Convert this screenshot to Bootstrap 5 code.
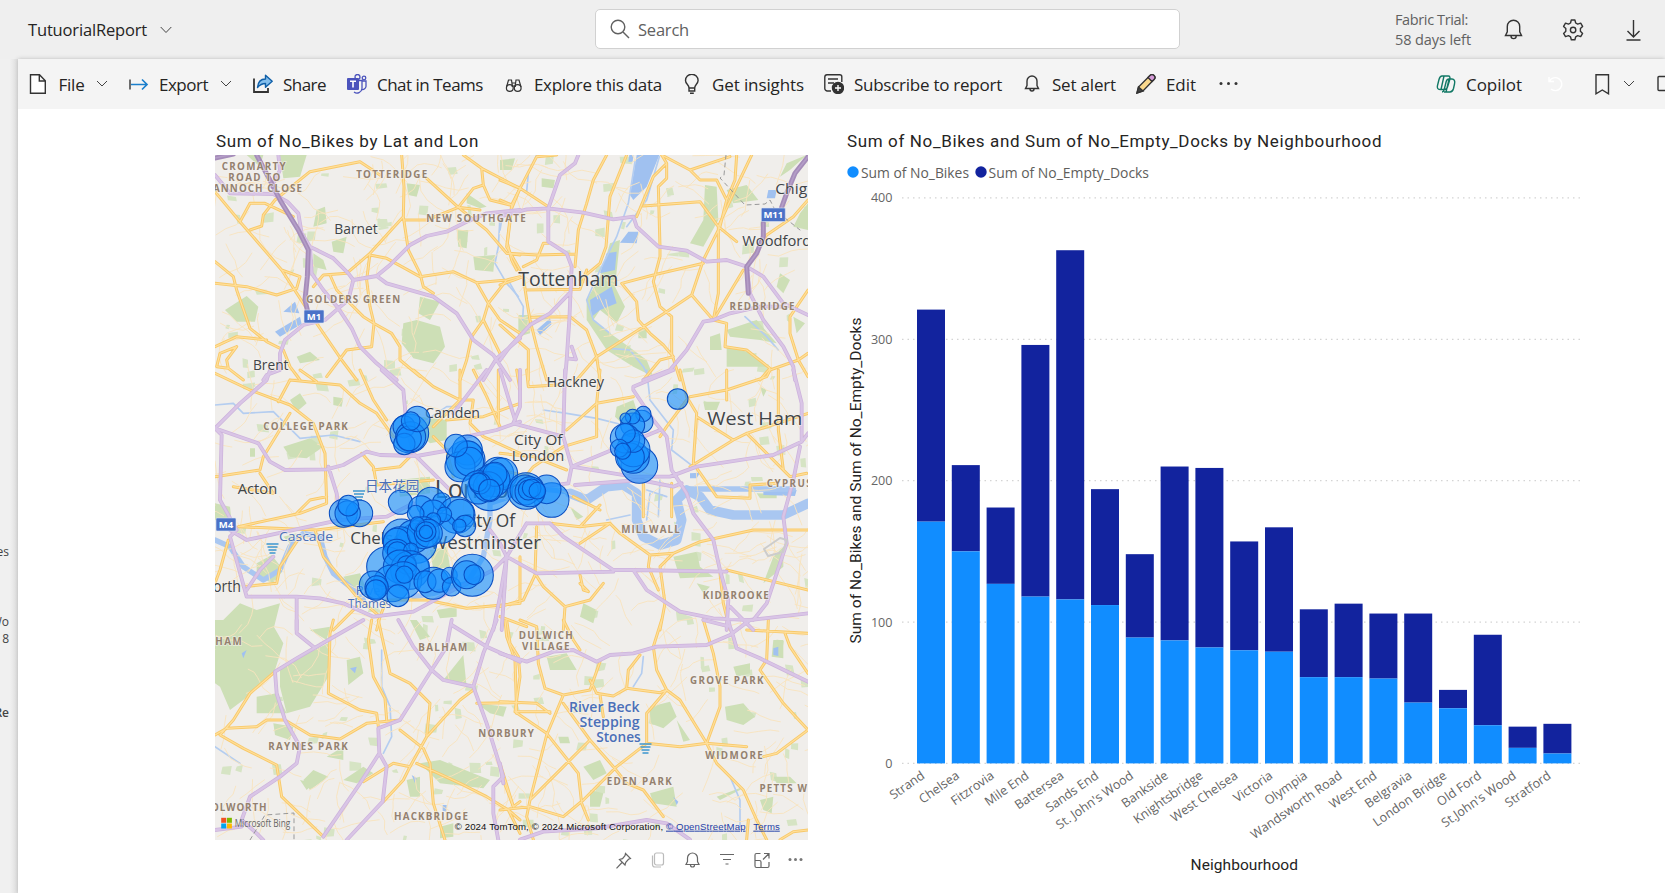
<!DOCTYPE html>
<html lang="en">
<head>
<meta charset="utf-8">
<title>TutuorialReport</title>
<link href="https://cdn.jsdelivr.net/npm/bootstrap@5.3.0/dist/css/bootstrap.min.css" rel="stylesheet">
<style>
body{font-family:"Open Sans","Noto Sans","Noto Sans CJK SC",sans-serif;background:#efefef;color:#252423;height:893px;overflow:hidden}
svg{display:block;flex:none}
.ln{fill:none;stroke:#333;stroke-width:1.4}
.thin{fill:none;stroke:#444;stroke-width:1}
.topbar{height:59px;display:grid;grid-template-columns:28px 567px 800px 109px 58px 63px 1fr;align-items:center}
.report-name{font-size:16.5px;line-height:24px}
.search-box{width:585px;height:40px;margin-top:-1px;background:#fff;border:1.5px solid #d1d1d1;border-radius:5px;padding-left:14px;color:#616161;font-size:16.5px}
.search-box span{margin-top:2px}
.trial{font-size:14.5px;line-height:20px;color:#616161}
.rail{width:18px;background:linear-gradient(90deg,#f0f0f0 55%,#dedede);overflow:hidden;font-size:12px;line-height:16px;color:#444}
.rail span{display:block;width:9px;direction:rtl;white-space:nowrap}
.canvas{background:#fff;box-shadow:0 0 4px #bbb;overflow:hidden}
.commands{height:50px;background:#f4f4f4;display:grid;grid-template-columns:100.5px 124px 94px 157px 178px 142px 198px 114px 82px 218px 112px 47px 62px 1fr;padding-left:10.5px;align-items:center;font-size:17px}
.cmd{display:flex;align-items:center;white-space:nowrap}
.cmd .lbl{margin-left:10px;margin-top:1px}
.cmd .chev{margin-left:12px}
[data-fit]{display:inline-block;white-space:nowrap}
.vtitle{font-family:Roboto,sans-serif;font-size:17px;line-height:24px;color:#252423}
.map-col{width:593px;margin-left:197px;padding-top:20px}
.map-col .vtitle{height:26px;padding-left:1px}
.chart-col{margin-left:32px}
.vis-tools{display:grid;grid-template-columns:35px 35px 34px 35px 34px 20px;padding:12px 0 0 400px}
.din{font-family:Roboto,sans-serif;fill:#252423}
.ax{font-size:12.6px;fill:#666}
.roads path{fill:none;stroke-linejoin:round;stroke-linecap:round}
.bub circle{fill:#118dff;fill-opacity:.6;stroke:#0a4fc2;stroke-width:3.2}
</style>
</head>
<body>
<header class="topbar">
  <span></span>
  <div class="d-flex align-items-center">
    <span class="report-name" data-fit="119">TutuorialReport</span>
    <svg style="margin:1px 0 0 13px" width="12" height="8"><path class="thin" d="M.7 1 6 6.5 11.3 1"/></svg>
  </div>
  <div class="search-box d-flex align-items-center">
    <svg width="20" height="20" class="ln" style="stroke:#616161"><circle cx="8" cy="8" r="6.8"/><path d="m13 13 6 6"/></svg>
    <span data-fit="51" class="ms-2">Search</span>
  </div>
  <div class="trial"><div><span data-fit="73">Fabric Trial:</span></div><div><span data-fit="76">58 days left</span></div></div>
  <svg width="20" height="24" class="ln"><path d="M1.5 17.5h16l-1.8-3.6V8.500a6.200 6.200 0 0 0-12.400 0v5.400zM7 18a2.600 2.600 0 0 0 5.200 0"/></svg>
  <svg width="23" height="24" viewBox="0 0 23 24" class="ln"><path d="M9.300 2h3.600l.8 3 2 1.100 3-.9 1.900 3.200L18.400 10.600v2.600l2.200 2.200-1.900 3.200-3-.9-2 1.100-.8 3H9.300l-.8-3-2-1.100-3 .9-1.900-3.200 2.200-2.200v-2.600L1.600 8.400l1.900-3.200 3 .9 2-1.100z" stroke-linejoin="round"/><circle cx="11.100" cy="12" r="2.700"/></svg>
  <svg width="18" height="24" class="ln"><path d="M8.500 2v16.500M2.500 13l6 6 6-6M1.500 22h14"/></svg>
</header>
<div class="d-flex" style="height:834px">
  <aside class="rail">
    <span style="margin-top:485px">es</span><span style="margin-top:54px">Wo</span><span style="margin-top:1px">8</span><span class="fw-semibold" style="margin-top:58px">Re</span>
  </aside>
  <main class="canvas flex-grow-1">
    <nav class="commands">
      <div class="cmd"><svg width="20" height="20" class="ln"><path d="M2.500.8h9l5.800 6v12.500H2.500zM11.300.8v6.200h6" fill="#fff"/></svg><span class="lbl" data-fit="26">File</span><svg class="chev" width="12" height="8"><path class="thin" d="m1 1 5 5 5-5"/></svg></div>
      <div class="cmd"><svg width="20" height="20" class="ln"><path d="M1 5.500v10"/><path d="M2 10.500h16M13 5.500l5 5-5 5" stroke="#1b7fcc" stroke-width="1.700"/></svg><span class="lbl" data-fit="49">Export</span><svg class="chev" width="12" height="8"><path class="thin" d="m1 1 5 5 5-5"/></svg></div>
      <div class="cmd"><svg width="20" height="20" class="ln"><path d="M1 4.500V18h14v-4" stroke-width="1.800"/><path d="M4.500 13.500C5 7.500 8 5 12.500 5V1.300l6.700 6-6.700 6V9.500c-3.500 0-5.500 1-8 4z" fill="#83beec" stroke="#0f5fa8" stroke-linejoin="round"/></svg><span class="lbl" data-fit="43">Share</span></div>
      <div class="cmd"><svg width="20" height="20"><g fill="none" stroke="#4b53bc" stroke-width="1.300"><circle cx="10.500" cy="3" r="2.500"/><circle cx="17" cy="4" r="1.800"/><path d="M8 6.500h7v8a5 5 0 0 1-8 3.500M15 7h4v5.500a3.500 3.500 0 0 1-4 3"/></g><rect y="4" width="12" height="12" rx="1" fill="#4b53bc"/><path d="M3 7.300h6M6 7.300v6.200" stroke="#fff" stroke-width="1.600"/></svg><span class="lbl" data-fit="106">Chat in Teams</span></div>
      <div class="cmd"><svg width="20" height="20" class="ln" style="stroke-width:1.200"><circle cx="5.800" cy="14" r="3.400"/><circle cx="13.700" cy="14" r="3.400"/><path d="M2.500 13 4.500 6h3l.7 5v2M17 13l-2-7h-3l-.7 5v2M8 9h3.500M8 12h3.500"/></svg><span class="lbl" data-fit="128">Explore this data</span></div>
      <div class="cmd"><svg width="20" height="20" class="ln"><path d="M7 14c0-3.500-3.500-4-3.500-7.500a6.300 6.300 0 0 1 12.600 0C16 10 12.700 10.500 12.700 14zM7 14v3h5.700v-3M8 19.300h3.800"/></svg><span class="lbl" data-fit="92">Get insights</span></div>
      <div class="cmd"><svg width="20" height="20" class="ln"><path d="M7 17H3.500a2.500 2.500 0 0 1-2.700-2.500V3A2.300 2.300 0 0 1 3 .8h12.800A2 2 0 0 1 17.800 2.800V8M4 5h10M4 9h6"/><circle cx="14" cy="14" r="5.500" fill="#333"/><path d="M11 14h6M14 11v6" stroke="#fff"/></svg><span class="lbl" data-fit="148">Subscribe to report</span></div>
      <div class="cmd"><svg width="20" height="20" class="ln"><path d="M3.500 14.500h13L15 11.500V7a5 5 0 0 0-10 0v4.500zM8 15a2 2 0 0 0 4 0"/></svg><span class="lbl" data-fit="64">Set alert</span></div>
      <div class="cmd"><svg width="20" height="20" class="ln"><path d="m1 19 1.500-6L14 1.500a2.500 2.500 0 0 1 4 4L7 17z" fill="#fbd98c"/><path d="m14 1.500a2.500 2.500 0 0 1 4 4l-2 2-4-4z" fill="#d59ad8"/><path d="m1 19 1.500-6 4.500 4z" fill="#444"/></svg><span class="lbl" data-fit="30">Edit</span></div>
      <div class="cmd"><svg width="22" height="6"><g fill="#333"><circle cx="3" cy="2.500" r="1.500"/><circle cx="10.500" cy="2.500" r="1.500"/><circle cx="18" cy="2.500" r="1.500"/></g></svg></div>
      <div class="cmd"><svg width="20" height="20" class="ln" style="stroke:#117865"><path d="M6 2h6.500c2 0 1.500 2.500 1 4.500l-2 6.500c-.7 2-1.500 2.500-3 2.500H4c-2.500 0-3-2-2.500-4L3 5.500C3.700 3 4.500 2 6 2zM8 18h6c2 0 3-1.500 3.500-3.500l1-4.500c.8-3-.3-5-2.500-5h-3c-1.500 0-2.300.8-2.800 2.500l-2 8c-.4 1.500-.7 2.500-2.200 2.500M8 2 5 15.500M13 5.500 10 18"/></svg><span class="lbl" data-fit="56">Copilot</span></div>
      <div class="cmd"><svg width="18" height="18" class="ln" style="stroke:#fff"><path d="M1 2v4.500h5M1.500 6.200A6.500 6.500 0 1 1 3 14"/></svg></div>
      <div class="cmd"><svg width="15" height="21" class="ln"><path d="M1 .8h12.500v19L7.300 16 1 19.800z"/></svg><svg style="margin-left:13px" width="12" height="8"><path class="thin" d="m1 1 5 5 5-5"/></svg></div>
      <div class="cmd"><svg width="12" height="18" class="ln"><rect x="1" y="1.500" width="20" height="14" rx="1"/></svg></div>
    </nav>
    <div class="d-flex">
      <section class="map-col">
        <div class="vtitle"><span data-fit="263">Sum of No_Bikes by Lat and Lon</span></div>
        <svg id="map" width="593" height="685" viewBox="215 155 593 685"></svg>
        <div class="vis-tools">
          <svg width="18" height="18" class="ln" style="stroke:#666;stroke-width:1.200"><path d="m10.500 1.500 5 5-2 .8-2.700 3L10 13 4.500 7.500l3-.8 2.500-3zM7 10.500l-5.500 5.800"/></svg>
          <svg width="18" height="18" class="ln" style="stroke:#bbb;stroke-width:1.200"><rect x="4.500" y="1" width="9" height="12" rx="2"/><path d="M2.500 3.500v9q0 2.500 2.500 2.500h6"/></svg>
          <svg width="18" height="18" class="ln" style="stroke:#666;stroke-width:1.200"><path d="M1 12.500h13l-1.500-3V6a5 5 0 0 0-10 0v3.500zM5.500 13a2 2 0 0 0 4 0"/></svg>
          <svg width="18" height="18" class="ln" style="stroke:#666;stroke-width:1.200"><path d="M1 2.500h14M4 7.500h8M6.500 12h3"/></svg>
          <svg width="18" height="18" class="ln" style="stroke:#666;stroke-width:1.200"><path d="M6.500 1.500H2.500Q1 1.500 1 3v11q0 1.500 1.500 1.500h11q1.500 0 1.500-1.500v-4M1 8.500h4.500q1.500 0 1.500 1.500v5.500M10 1.500h5v5M15 1.500 9 7.500"/></svg>
          <svg width="18" height="18"><g fill="#777"><circle cx="2" cy="7.500" r="1.500"/><circle cx="7.500" cy="7.500" r="1.500"/><circle cx="13" cy="7.500" r="1.500"/></g></svg>
        </div>
      </section>
      <section class="chart-col">
        <svg id="chart" width="780" height="784" viewBox="840 109 780 784"></svg>
      </section>
    </div>
  </main>
</div>
<script src="https://cdn.jsdelivr.net/npm/bootstrap@5.3.0/dist/js/bootstrap.bundle.min.js"></script>
<script>
// letter-spacing that makes each label take its nominal width
document.querySelectorAll('[data-fit]').forEach(e=>{
  const w=e.getBoundingClientRect().width,n=e.textContent.length;
  e.style.letterSpacing=((e.dataset.fit-w)/n).toFixed(3)+'px';
});

// stacked column chart
const rows=[['Strand',171,321],['Chelsea',150,211],['Fitzrovia',127,181],['Mile End',118,296],['Battersea',116,363],['Sands End',112,194],["St. John's Wood",89,148],['Bankside',87,210],['Knightsbridge',82,209],['West Chelsea',80,157],['Victoria',79,167],['Olympia',61,109],['Wandsworth Road',61,113],['West End',60,106],['Belgravia',43,106],['London Bridge',39,52],['Old Ford',27,91],["St.John's Wood",11,26],['Stratford',7,28]];
const Y=v=>763.4-v*1.4137;
let s='<text class="din" x="847" y="146.500" font-size="17" textLength="534.500">Sum of No_Bikes and Sum of No_Empty_Docks by Neighbourhood</text>'+
'<circle cx="853" cy="172" r="5.700" fill="#118dff"/><text x="861" y="177.500" font-size="14.500" fill="#605e5c" textLength="108" lengthAdjust="spacingAndGlyphs">Sum of No_Bikes</text>'+
'<circle cx="981" cy="172" r="5.700" fill="#12239e"/><text x="988.500" y="177.500" font-size="14.500" fill="#605e5c" textLength="160.500" lengthAdjust="spacingAndGlyphs">Sum of No_Empty_Docks</text>';
for(let v=0;v<=400;v+=100)s+=`<path d="M902 ${Y(v)}H1584" stroke="#d4d4d4" stroke-width="1.300" stroke-dasharray="1.500 4"/><text class="ax" x="892.500" y="${Y(v)+4.5}" text-anchor="end">${v}</text>`;
rows.forEach(([n,a,t],i)=>{
  const x=917+i*34.8;
  s+=`<rect x="${x}" y="${Y(t)}" width="28" height="${Y(a)-Y(t)}" fill="#12239e"/><rect x="${x}" y="${Y(a)}" width="28" height="${Y(0)-Y(a)}" fill="#118dff"/>`+
  `<text class="ax" text-anchor="end" transform="translate(${x+8.5} 777.500) rotate(-35)">${n}</text>`;
});
s+='<text class="din" font-size="15.500" transform="translate(861 643.500) rotate(-90)" textLength="326">Sum of No_Bikes and Sum of No_Empty_Docks</text><text class="din" x="1190.500" y="870" font-size="15.500" textLength="107.500">Neighbourhood</text>';
document.getElementById('chart').innerHTML=s;

// map sheets, each drawn on a 3x grid from its own origin
const sheets=[
{o:[200,120],
p:'M45 165 90 220 220 222 262 245 295 280 305 340 330 380 400 415 445 460 460 480 530 468 570 435 630 375 680 348 740 335 800 305 860 280 960 270M235 105 240 150 215 200M330 380 335 460 370 510 415 565 455 625 480 680 530 730 590 780M460 480 445 540 415 565 375 600 310 615 255 660 240 700 240 750 200 765 190 780M530 468 560 490 700 530 770 580 820 660 880 705 930 780M960 655 890 715 850 780',
d:'M45 114 100 102M170 105 215 190 240 240 295 330 325 390 322 470 315 540 322 570',
r:'M45 215 120 305 245 450 310 550 350 610 425 720 470 780M120 305 150 250 195 250 280 290M150 330 185 318 190 285 225 240 330 155 480 125 540 165M605 105 612 200 610 290 510 400 440 460 370 465 340 500M610 290 625 390 660 460 670 500 700 520M510 400 500 480 510 560 522 610 515 680 440 690 380 770M510 405 560 415 660 470 760 455 830 488 920 480 960 470M390 465 410 510 490 590 525 612 575 640 600 680 600 720 660 770M610 300 680 300 775 262 840 270M680 175 775 262 820 205 850 195 870 240 930 255M790 105 845 145 850 195M845 145 960 205 935 255 920 380 960 450M775 262 860 330 920 400 960 405M45 425 100 470 110 510 150 625 200 665 250 690 270 740 300 780M45 490 140 500 230 525 290 505 300 470 245 450M45 680 110 650 200 660M110 680 60 700 50 740 85 745 130 780M110 680 80 720 85 745M830 488 865 550 850 600 880 660 900 700M920 480 865 550 900 600 960 640M850 600 815 650 800 720 780 780',
g:'M75 570 140 528 175 560 165 605 110 605ZM610 610 650 600 720 620 735 680 700 730 640 715 605 670ZM820 410 885 405 880 455 825 450ZM240 105 320 105 300 170 250 175ZM350 270 375 260 380 310 340 320ZM800 220 860 260 840 265 800 250ZM660 530 720 545 690 600 655 580ZM290 710 330 695 360 720 300 730ZM395 365 440 350 430 400 400 395ZM770 330 805 330 800 385 775 380ZM340 400 370 420 380 450 340 440ZM620 190 660 195 650 230 625 225ZM140 105 190 105 180 140Z',
w:'M225 635 300 590 305 612 240 650ZM250 575 285 545 298 580Z',v:'M900 290 895 380 885 430 920 490 955 530'},
{o:[500,120],
p:'M235 105 225 130 180 165 145 265 145 365 200 400 215 440 208 600 200 720 195 780M0 290 80 268 145 265 250 278 340 298 400 290 410 320 475 380 560 392 620 425 680 420 740 440 790 470 850 550 924 585M208 520 150 580 90 615 30 680 0 720M215 680 228 718 200 715M430 780 510 750 560 690 610 605 640 600 690 580 780 560 850 560M740 440 750 520 790 600 850 680 880 740 885 780',
d:'M924 110 885 160 860 220 845 262M790 310 790 350 770 400 740 440 745 520',
r:'M0 180 60 205 145 260M170 105 110 110 60 205 35 265 22 370 35 420 50 450M0 240 35 255M320 105 280 180 260 250 235 330 225 440M380 105 330 230 318 380 300 430 240 480M485 105 500 130 460 170 410 290M500 130 500 175 475 200 480 380 480 410 460 485 480 560 515 590 515 700 540 780M485 105 570 150 690 110M570 150 600 180 650 180 680 240M710 105 705 180 680 240 660 320 610 420 575 525 500 575 290 710 230 780M755 105 700 220 655 320 655 440 655 520 640 600M430 258 600 245 655 320 710 365M610 430 460 465 365 490 410 545 415 600 450 640 490 675 520 710M575 525 640 600 680 610 675 680 740 690 810 745 780 780M640 600 730 450M924 240 880 290 800 345 740 440M0 495 70 470 80 540 90 600 110 680 140 780M22 400 110 405 225 402M70 440 110 420 130 370 145 370M75 510 240 508 260 450M95 592 210 590 260 630 290 710 300 780M0 615 85 690 85 780M924 510 870 590 870 640 895 720 924 700M895 720 810 750M895 720 924 770M520 710 480 720 430 780',
g:'M615 195 650 200 655 300 610 380 570 370 610 300ZM680 210 740 195 775 240 700 250ZM330 370 360 360 345 500 375 560 350 610 300 570 280 600 330 640 400 690 440 720 460 770 400 740 320 690 260 600 260 540 300 470ZM680 630 770 600 830 670 780 660 690 650ZM680 680 760 700 810 740 680 740ZM880 590 915 610 890 640ZM55 585 95 585 90 640 55 650ZM860 130 920 105 870 150 840 170ZM125 175 165 180 160 205 125 200ZM0 120 45 115 35 150 0 150ZM900 280 924 250 924 330 880 320ZM840 460 870 480 850 520 830 500ZM415 630 440 625 440 655 415 655ZM630 650 660 640 665 690 630 690Z',
w:'M410 105 478 105 440 200 400 240 390 225ZM385 335 415 335 410 370 360 368ZM320 400 350 395 345 450 300 460ZM270 540 335 500 350 550 300 570 275 590ZM110 630 150 595 155 612 120 645ZM805 210 830 210 825 235 800 235ZM388 105 400 105 398 125 385 125Z',v:'M405 125 385 250 350 350 300 450 260 540 280 600 330 640M478 110 440 240 380 320M330 685 390 690 430 740 450 780M80 215 85 160 110 105M735 590 800 650 835 690M0 330 5 300M30 490 70 560 68 600'},
{o:[200,370],
p:'M210 0 200 30 120 100 45 175 65 195 60 390 110 480 90 500 140 680 290 680 360 685 430 700 520 740 640 725 760 660 880 600 920 560M45 175 175 220 210 275 255 300 380 298 430 285 500 245 540 255 650 258 780 235 800 200 890 180 960 155M385 290 410 370 420 450 140 510 90 480M420 450 560 440 640 400M545 0 610 60 620 170 640 250 700 310 750 360M860 0 760 130M290 680 290 780M140 660 180 600 220 560M880 780 900 680 920 560M920 560 900 520 870 480',d:'',
r:'M45 10 150 60 270 105 340 160 375 250 380 400 300 430 115 470 350 480 550 455M270 30 420 45 480 100 530 130 580 200M270 30 235 95M300 0 350 35M270 130 190 260 180 300 45 320M180 310 220 370 100 350M485 250 520 290 530 345 700 330M520 300 600 290 640 250M640 0 700 50 780 90 820 90 810 160 850 200 960 250M895 0 895 160M950 0 960 60M780 0 780 90 700 170M300 500 240 590 230 640 130 650M345 480 370 560 420 620 470 680 540 740 560 690 680 690 800 715 960 700M85 510 60 600 45 640M540 740 530 780M470 710 400 780M820 0 860 80 900 170M700 200 740 240 760 320M480 0 520 90 560 150M740 150 850 140 960 100M960 560 960 700M290 430 330 390 380 380',
g:'M660 140 740 150 740 210 690 220 660 190ZM250 230 330 205 370 230 320 265 270 260ZM170 580 215 555 250 600 220 640 170 620ZM60 760 120 700 170 720 240 700 220 780 60 780ZM45 400 90 410 95 460 45 450ZM590 330 690 320 690 370 600 380ZM270 90 300 70 320 100 290 125ZM690 540 740 530 750 590 700 600ZM710 720 770 710 770 740 720 745ZM400 80 430 85 425 110 400 105ZM150 235 165 235 165 260 150 260ZM430 620 480 610 500 660 460 660ZM250 500 290 490 270 520Z',
w:'',t:'M45 510 90 530 130 590 190 630 240 600 270 530 310 490 360 500 375 560 400 610 450 650 490 690M640 680 700 670 800 640 850 560 870 450 870 400 960 370',v:'M45 105 100 100 130 130 220 125 300 205 400 195 480 215M650 170 740 110 780 110'},
{o:[500,370],
p:'M60 0 60 110 40 160 190 200 215 290 400 320 510 320 590 290 820 255 905 215 924 190M520 0 400 50 400 60 460 150 500 200 515 300 560 370 580 430 640 510 660 600 685 690 680 780M195 0 190 190M215 290 205 340 120 350M225 345 420 330 520 350 545 340M80 460 150 460 190 500 340 600 400 600 680 605M20 560 110 610 340 605M400 600 440 660 540 725 640 745 750 750 924 730M690 710 760 780M760 750 800 700 860 520 850 440 880 330 900 230M215 290 480 180M880 0 905 100 905 215M20 560 5 780M20 560 80 460M0 0 45 150',d:'',
r:'M80 0 85 50 170 45M300 0 290 100 200 180M290 100 290 200 190 230M290 100 400 80M540 0 560 80 590 130 580 280 650 380 750 385 750 345 830 340M570 80 680 60 800 20 810 0M680 0 680 90M560 90 500 170 480 200M570 290 700 210 740 190 924 130M700 210 590 140M740 190 860 310M835 0 835 180 850 300 870 320 920 310M430 340 430 440M515 340 515 440M150 460 240 470 330 460 360 490 450 555 520 550 600 515 760 480 924 480M300 405 240 470M220 380 300 420M330 460 240 520M520 550 480 590 495 700 480 780M450 555 445 590 475 660M660 610 670 700 690 780M680 600 924 660M110 470 105 610 130 650 195 710 190 780M105 615 70 690 0 710M195 710 270 690 310 640M240 615 250 660 265 665 240 640M0 250 100 260 200 300M60 340 100 290 190 230M0 300 90 320M0 740 80 770',
g:'M350 110 400 90 420 150 370 165 345 140ZM520 560 590 545 600 590 640 620 540 625ZM820 560 850 530 850 590 790 640ZM250 700 290 720 280 760 240 740ZM610 95 660 95 650 120 615 120ZM780 50 800 60 790 80ZM590 640 630 650 610 670ZM770 370 830 372 830 385 780 385ZM210 410 250 440 230 450Z',
w:'M790 365 890 360 885 378 790 375ZM570 310 600 308 590 325 570 325Z',T:'M210 370 260 390 320 350 370 345 410 370 410 450 430 500 480 525 530 510 545 450 530 390 560 360 600 380 630 420 700 435 850 435 924 400',t:'M0 370 60 350 200 365 250 385M550 357H880',v:'M130 120 200 130 290 145 370 165M440 360 500 380M450 370 440 450M480 330 475 440M440 0 450 90 520 180 515 240 580 290M320 450 390 435'},
{o:[200,620],
p:'M290 0 290 40 340 80M490 0 385 60 290 115 225 155 230 220 255 300 300 380 290 430 240 470 150 530 125 600 170 640 190 660M595 0 640 80 695 150 730 180 820 200 850 100 890 0M755 0 740 80 695 150 600 300 535 325 538 400 480 490 370 650M538 400 560 440 548 545 440 660M755 15 860 80 960 125M820 200 860 310 910 470 880 500 880 580 895 660M45 630 125 620',d:'',
r:'M400 0 390 40 385 220 480 270 530 280 535 320M225 155 150 220 100 300 60 345 130 385 230 435 245 530 370 650M45 345 80 325 170 320 200 300 255 300 330 345 420 357 500 310 600 300M515 0 505 60 520 170 555 235 560 300M535 0 570 160 630 190 690 250 680 350 630 440 610 480 550 545M820 210 780 240 680 350M600 330 670 385 690 430 700 550 735 660M490 485 580 430 630 440M650 430 780 490 860 530 925 570 960 600M910 480 940 560 960 545M925 570 960 640M915 0 920 50 945 120 950 280M830 250 960 248',
g:'M45 0 210 0 250 70 225 150 130 240 90 270 60 200 45 190ZM240 140 385 70 385 170 330 260 260 280 240 200ZM440 120 480 110 490 160 445 195ZM730 180 790 105 800 200 760 185ZM660 430 720 420 870 480 850 505 720 490ZM220 310 280 320 270 360 225 345ZM310 480 340 450 385 470 330 510ZM430 480 490 440 520 460 470 490ZM300 480 340 490 320 510ZM830 250 920 260 910 290 870 280ZM330 30 390 20 380 60ZM630 0 650 0 690 50 660 60ZM170 230 230 220 260 280 170 280ZM720 620 760 610 760 650 720 655ZM380 410 430 380 430 420ZM620 480 660 470 660 530 630 530Z',
w:'M450 145 470 140 465 160ZM635 465 650 475 645 490ZM728 555 740 555 740 575 728 572ZM125 100 140 90 130 115Z',v:'M545 90 545 200 570 260 575 350 550 400M45 380 120 430'},
{o:[500,620],
p:'M0 100 80 125 160 95 220 90 290 125 330 105 400 100 470 80 620 75 690 45 750 0M610 0 690 20 700 50 710 85 780 115 924 185M685 0 690 20M0 430 10 490M60 659 130 635 290 625 440 600 500 610 570 659',d:'',
r:'M20 0 30 70 55 110 60 170 45 275 140 340 235 460 245 550 265 600M60 0 110 20 115 130 135 205 190 225 140 345 90 540M190 225 270 210 300 125M270 180 290 220 340 228 380 205 480 218 500 210 540 240 620 370 740 380M485 0 460 80 470 150 500 210 440 280 440 370 350 440 250 540 190 590 90 560 0 570M45 275 150 275M190 250 270 360 340 440 380 490 430 510 490 590M440 370 540 380 620 370 650 430 730 510 770 600 800 659M610 0 640 100 660 200 660 260 620 370M740 30 924 40M855 40 870 80 924 160M805 0 800 120 780 150 850 250 924 330 830 400 790 410M270 360 200 430 130 500 90 540 80 590 100 659M0 430 40 560M0 245 110 250 150 280M190 0 220 60 240 90M380 205 385 150 420 105M924 630 880 635 840 659M745 600 740 659M300 225 310 290',
g:'M450 260 510 245 530 290 490 325 450 310ZM675 260 730 250 765 290 730 315 680 300ZM250 440 300 420 320 460 280 480ZM450 520 520 500 530 560 460 550ZM270 510 310 520 300 560 270 560ZM140 110 200 100 230 150 150 150ZM700 140 750 130 750 160 710 170ZM650 530 730 500 720 510 660 540ZM780 540 820 530 815 580 790 570ZM820 60 850 60 850 115 815 110ZM175 350 205 350 210 370 180 370ZM820 470 870 470 890 490 830 490ZM530 300 570 360 550 365Z',
w:'M820 85 835 80 835 108 820 105ZM520 530 535 545 530 555Z',v:'M430 110 425 160 400 200M690 470 720 540 720 620'}];
// repeatable pseudo-random texture of side streets and small parks
let sd=11;const R=()=>(sd=(sd*16807)%2147483647)/2147483647;
let minor='',parks='';
for(let i=0;i<680;i++){let x=215+R()*593,y=155+R()*685,a=R()*6.28;minor+=`M${x.toFixed(1)} ${y.toFixed(1)}`;for(let k=0;k<4;k++){a+=(R()-.5)*1.1;const l=5+R()*9;x+=Math.cos(a)*l;y+=Math.sin(a)*l;minor+=` ${x.toFixed(1)} ${y.toFixed(1)}`}}
for(let i=0;i<210;i++){const x=215+R()*593,y=155+R()*685,w=3+R()*9,h=3+R()*7;parks+=`M${x.toFixed(1)} ${y.toFixed(1)}l${w.toFixed(1)} ${(R()*4-2).toFixed(1)} ${(R()*4-2).toFixed(1)} ${h.toFixed(1)} ${(-w).toFixed(1)} ${(R()*4-2).toFixed(1)}z`}
const layer=f=>sheets.map(t=>`<g transform="translate(${t.o}) scale(.33333)">${f(t)}</g>`).join('');
const P=(d,c,w)=>d?`<path d="${d}" stroke="${c}" stroke-width="${w}"/>`:'';
let m='<rect x="215" y="155" width="593" height="685" fill="#f0eeeb"/><path d="'+parks+'" fill="#d6e4c4"/>';
m+=layer(t=>`<path d="${t.g}" fill="#cddfb6"/><path d="${t.w}" fill="#a0c1f0"/>`);
m+='<g class="roads">'+layer(t=>P(t.v,'#b4cdf0',5)+P(t.t,'#a9c7f1',16)+P(t.T,'#a9c7f1',29))+
`<path d="${minor}" stroke="#f8e3bd" stroke-width=".9"/>`+
layer(t=>P(t.r,'#f8c96a',9))+layer(t=>P(t.r,'#ffdf9b',3.500))+layer(t=>P(t.p,'#cdb3dc',11.500))+layer(t=>P(t.p,'#d9c5e6',7))+layer(t=>P(t.d,'#a58cb9',15))+layer(t=>P(t.d,'#b49dc7',5))+
'<path d="M726 155 724 175 720 178 745 205 765 204 770 200 775 210 800 230M250 840 265 815 294 813 294 840" stroke="#999" stroke-width="1" stroke-dasharray="4 4"/><path d="M764 549 780 538 787 540 783 552 768 556Z" stroke="#ccc" stroke-width="2"/></g>';
[[304,310,20,13,'M1'],[761.3,208,24,13.500,'M11'],[216,518,20,13,'M4']].forEach(([x,y,w,h,t])=>m+=`<rect x="${x}" y="${y}" width="${w}" height="${h}" rx="1" fill="#4a72c8" stroke="#dfe6f5" stroke-width=".6"/><text x="${x+w/2}" y="${y+10}" font-size="9.500" font-weight="700" fill="#fff" text-anchor="middle">${t}</text>`);
[[272.500,548],[645.500,748],[359,495]].forEach(([x,y])=>m+=`<path d="M${x-6} ${y-4}h12M${x-5} ${y-1}h10M${x-4} ${y+2}h8M${x-3} ${y+5}h6" stroke="#3c97cf" stroke-width="1.700"/>`);
// kind: s suburb, t town, b blue landmark
const L=[['s',221.7,169.500,64,'CROMARTY'],['s',228.3,180.500,52,'ROAD TO'],['s',213,191.500,89,'ANNOCH CLOSE'],['s',356.200,178,71,'TOTTERIDGE'],['t',334.300,234,43.500,'Barnet',14],['s',426.2,222,99.500,'NEW SOUTHGATE'],['s',306.200,303,94,'GOLDERS GREEN'],['t',253,370,35.500,'Brent',14],['t',775.200,193.700,32,'Chig',14],['t',742.300,246,69,'Woodford',14],['t',518.300,285.700,100,'Tottenham',20],['s',729.500,309.700,65,'REDBRIDGE'],['t',546.500,387.300,57.500,'Hackney',14],['t',425,417.700,55,'Camden',14],['s',263.300,430,84.500,'COLLEGE PARK'],['t',237.700,494.300,39.500,'Acton',14],['b',365,491,54.500,'日本花园',13.500,400],['b',279,541.300,54,'Cascade',13,400],['t',350.200,543.700,62,'Chelsea',17],['t',434.500,497.700,90,'London',26,500],['t',461,526.700,54,'City Of',19],['t',430,549,111,'Westminster',19],['t',514,445,48.500,'City Of',14.500],['t',511.700,461.300,52.500,'London',14.500],['t',707.300,424.700,95,'West Ham',19],['s',766.700,487,45,'CYPRUS'],['s',621.2,532.700,58.500,'MILLWALL'],['s',702.700,599,66,'KIDBROOKE'],['t',213,591.700,28,'orth',17],['b',355.700,594.500,30,'River',12,400],['b',348,608,43,'Thames',12,500],['s',215.200,645,26.500,'HAM'],['s',418.300,651.300,49,'BALHAM'],['s',268.300,750,79.500,'RAYNES PARK'],['s',478.300,737,55.500,'NORBURY'],['s',211,811,55.500,'OLWORTH'],['s',394,820,74,'HACKBRIDGE'],['s',518.700,639,54,'DULWICH'],['s',522,650,47.500,'VILLAGE'],['s',690,684,73.500,'GROVE PARK'],['b',569,712,70.500,'River Beck',13.500],['b',579.500,726.700,60,'Stepping',13.500],['b',596.200,741.700,44.500,'Stones',13.500],['s',705.300,758.700,57.500,'WIDMORE'],['s',606.700,785,65,'EDEN PARK'],['s',759.500,791.700,47.500,'PETTS W']];
const K={s:['#94816f',9.8,700],t:['#404448',14,500],b:['#4a6fb8',13,600]};
L.forEach(([k,x,y,w,t,z,fw])=>m+=`<text x="${x}" y="${y}" font-size="${z||K[k][1]}" font-weight="${fw||K[k][2]}" fill="${K[k][0]}" stroke="#f4f2ef" stroke-width="1.600" stroke-opacity=".7" paint-order="stroke" textLength="${w}" lengthAdjust="${k=='s'?'spacing':'spacingAndGlyphs'}">${t}</text>`);
const B1=[[628,190,58],[612,170,33],[632,200,45],[613,222,32],[627,205,37],[652,147,38],[632,153,28],[797,270,58],[802,240,45],[805,255,42],[780,290,45],[808,275,43],[768,227,34],[870,355,67],[893,310,48],[905,312,48],[880,330,50],[835,352,50],[865,350,45],[885,313,36],[840,340,32],[835,337,28],[868,360,32],[601,397,36],[430,430,42],[478,430,40],[443,430,38],[445,407,31],[693,397,45],[663,415,38],[725,395,27],[770,435,55],[780,430,42],[725,475,45],[700,430,40],[795,468,32],[778,467,20],[733,433,22],[647,431,25],[700,450,22],[605,505,58],[650,520,60],[640,500,50],[600,520,50],[590,515,40],[670,488,48],[685,490,42],[652,462,22],[678,485,30],[678,486,20],[560,590,60],[590,550,42],[592,545,30],[633,541,22],[630,600,58],[600,590,50],[620,585,28],[650,590,38],[575,640,55],[610,630,55],[613,614,26],[520,645,42],[530,652,35],[528,660,31],[594,677,33],[700,640,48],[675,635,33],[718,632,35],[748,616,24],[755,650,28],[817,616,63],[800,614,42],[822,614,30]];
const B2=[[533,87,31],[425,155,34],[430,132,23],[398,165,36],[398,140,22],[376,145,16],[418,285,55],[400,262,48],[400,240,50],[390,262,43],[375,205,44],[400,213,34],[376,190,30],[358,235,27],[368,244,24],[155,390,52],[140,358,43],[78,363,55],[75,360,45],[90,365,45],[85,360,30],[95,355,28],[112,362,25]];
const C=b=>b.map(c=>`<circle cx="${c[0]}" cy="${c[1]}" r="${c[2]}"/>`).join('');
m+=`<g class="bub"><g transform="translate(200 370) scale(.33333)">${C(B1)}</g><g transform="translate(500 370) scale(.33333)">${C(B2)}</g></g>`;
m+='<path fill="#f25022" d="M221.200 817.800h5v5h-5z"/><path fill="#7fba00" d="M226.900 817.800h5v5h-5z"/><path fill="#00a4ef" d="M221.200 823.500h5v5h-5z"/><path fill="#ffb900" d="M226.900 823.500h5v5h-5z"/><text x="234.700" y="826.500" font-size="10" fill="#666" textLength="55.500" lengthAdjust="spacingAndGlyphs">Microsoft Bing</text>'+
'<g font-family="Liberation Sans" font-size="9.600" fill="#111"><text x="454.700" y="829.700" textLength="208.500">© 2024 TomTom, © 2024 Microsoft Corporation,</text><g fill="#1f3fa8" text-decoration="underline"><text x="666" y="829.700" textLength="79.500">© OpenStreetMap</text><text x="753.300" y="829.700" textLength="26.500">Terms</text></g></g>';
document.getElementById('map').innerHTML=m;
</script>
</body>
</html>
